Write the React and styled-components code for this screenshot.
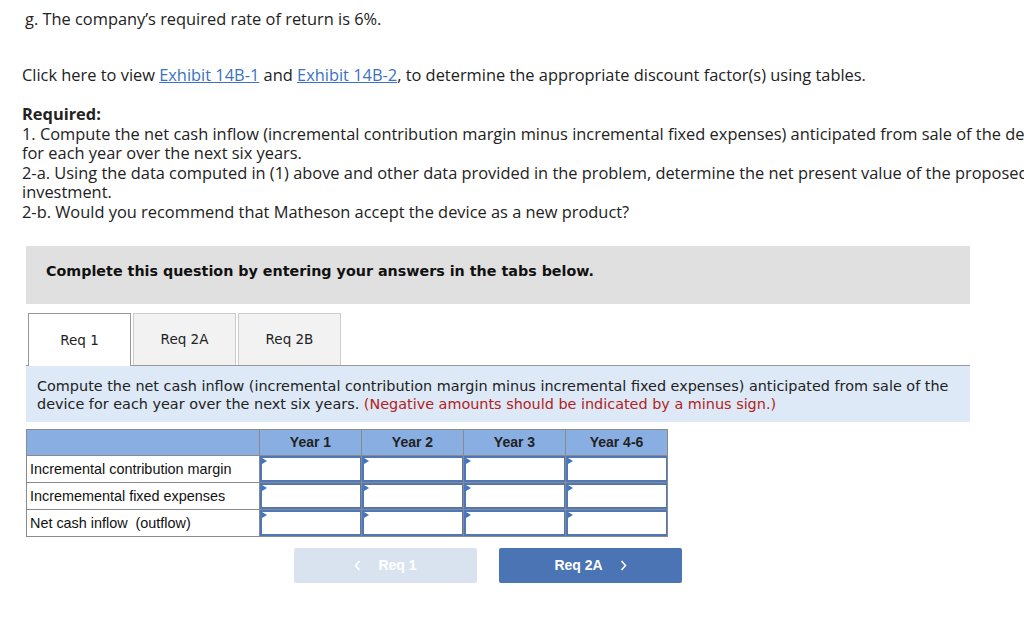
import React from 'react';
import styled, { createGlobalStyle } from 'styled-components';

const GlobalStyle = createGlobalStyle`
    html, body {
        margin: 0;
        padding: 0;
        background: #fff;
        overflow: hidden;
    }
`;

const years = ["Year 1", "Year 2", "Year 3", "Year 4-6"];
const rows = [
    "Incremental contribution margin",
    "Incrememental fixed expenses",
    "Net cash inflow  (outflow)"
];

const ChevronIcon = ({ right }) => (
    <svg width="7" height="11" viewBox="0 0 7 11">
        <polyline
            points={right ? "1.5,1 5.5,5.5 1.5,10" : "5.5,1 1.5,5.5 5.5,10"}
            fill="none"
            stroke="#fff"
            strokeWidth="1.6"
        />
    </svg>
);

export default function App()
{
    return (
        <Page>
            <GlobalStyle />
            <Para>g. The company’s required rate of return is 6%.</Para>
            <ClickLine>
                Click here to view <Link>Exhibit 14B-1</Link> and <Link>Exhibit 14B-2</Link>, to determine the appropriate discount factor(s) using tables.
            </ClickLine>
            <Required>
                <strong>Required:</strong><br />
                1. Compute the net cash inflow (incremental contribution margin minus incremental fixed expenses) anticipated from sale of the device<br />
                for each year over the next six years.<br />
                2-a. Using the data computed in (1) above and other data provided in the problem, determine the net present value of the proposed<br />
                investment.<br />
                2-b. Would you recommend that Matheson accept the device as a new product?
            </Required>

            <Widget>
                <Banner>Complete this question by entering your answers in the tabs below.</Banner>
                <Tabs>
                    <Tab active>Req 1</Tab>
                    <Tab>Req 2A</Tab>
                    <Tab>Req 2B</Tab>
                </Tabs>
                <Instruction>
                    Compute the net cash inflow (incremental contribution margin minus incremental fixed expenses) anticipated from sale of the device for each year over the next six years. <Red>(Negative amounts should be indicated by a minus sign.)</Red>
                </Instruction>

                <Table>
                    <thead>
                        <tr>
                            <HeadCell label />
                            {years.map((y) => <HeadCell key={y}>{y}</HeadCell>)}
                        </tr>
                    </thead>
                    <tbody>
                        {rows.map((r) =>
                            <tr key={r}>
                                <LabelCell>{r}</LabelCell>
                                {years.map((y) =>
                                    <InputCell key={y}>
                                        <InputBox><Marker /></InputBox>
                                    </InputCell>)}
                            </tr>)}
                    </tbody>
                </Table>

                <NavRow>
                    <NavButton disabled><ChevronIcon />Req 1</NavButton>
                    <NavButton>Req 2A<ChevronIcon right /></NavButton>
                </NavRow>
            </Widget>
        </Page>
    );
}

const Page = styled.div`
    width: 1160px;
    padding: 9px 0 0 22px;
    font-family: "Open Sans", "Lato", sans-serif;
    font-size: 16.4px;
    color: #222;
`

const Para = styled.div`
    line-height: 20px;
    padding-left: 3px;
`

const ClickLine = styled.div`
    line-height: 20px;
    margin-top: 36px;
`

const Link = styled.span`
    color: #3b72c2;
    text-decoration: underline;
`

const Required = styled.div`
    margin-top: 19px;
    line-height: 19.6px;

    strong {
        font-weight: 700;
    }
`

const Widget = styled.div`
    margin: 24px 0 0 4px;
    width: 944px;
`

const Banner = styled.div`
    background: #e0e0e0;
    height: 58px;
    box-sizing: border-box;
    padding: 0 0 7px 20px;
    display: flex;
    align-items: center;
    font-family: "DejaVu Sans", Verdana, sans-serif;
    font-weight: 700;
    font-size: 14.3px;
    color: #111;
`

const Tabs = styled.div`
    display: flex;
    gap: 2px;
    margin-top: 9px;
    padding-left: 2px;
    border-bottom: 1px solid #999;
`

const Tab = styled.div`
    width: 101px;
    display: flex;
    align-items: center;
    justify-content: center;
    border: 1px solid ${(p) => (p.active ? "#999" : "#ccc")};
    border-bottom: none;
    background: ${(p) => (p.active ? "#fff" : "#f2f2f2")};
    margin-bottom: ${(p) => (p.active ? "-1px" : "0")};
    height: ${(p) => (p.active ? "52px" : "51px")};
    font-family: "DejaVu Sans", Verdana, sans-serif;
    font-size: 13.5px;
    color: #222;
`

const Instruction = styled.div`
    background: #dde9f6;
    padding: 11px 11px 9px;
    font-family: "DejaVu Sans", Verdana, sans-serif;
    font-size: 14.4px;
    line-height: 18px;
    color: #222;
`

const Red = styled.span`
    color: #b22222;
`

const Table = styled.table`
    margin-top: 7px;
    border-collapse: collapse;
    font-family: "Liberation Sans", Arial, sans-serif;
`

const HeadCell = styled.th`
    background: #88aee2;
    border: 1px solid #8a8a8a;
    width: ${(p) => (p.label ? "232px" : "101px")};
    height: 25px;
    padding: 0;
    font-size: 14px;
    font-weight: 700;
    color: #222;
`

const LabelCell = styled.td`
    border: 1px solid #8a8a8a;
    height: 26px;
    padding: 0 0 0 3px;
    font-size: 14.4px;
    color: #111;
    white-space: pre;
`

const InputCell = styled.td`
    border: 1px solid #8a8a8a;
    padding: 0;
    height: 26px;
`

const InputBox = styled.div`
    position: relative;
    height: 22px;
    border: 2px solid #4f76b6;
    border-right-width: 1px;
    background: #fff;
`

const Marker = styled.span`
    position: absolute;
    left: 0;
    top: 0;
    width: 0;
    height: 0;
    border-top: 3px solid transparent;
    border-bottom: 3px solid transparent;
    border-left: 5px solid #3f73c6;
`

const NavRow = styled.div`
    display: flex;
    gap: 22px;
    margin: 11px 0 0 268px;
`

const NavButton = styled.div`
    width: 183px;
    height: 35px;
    display: flex;
    align-items: center;
    justify-content: center;
    gap: 17px;
    border-radius: 2px;
    background: ${(p) => (p.disabled ? "#d9e3f0" : "#4a74b4")};
    color: #fff;
    font-family: "Liberation Sans", Arial, sans-serif;
    font-weight: 700;
    font-size: 14px;
`
